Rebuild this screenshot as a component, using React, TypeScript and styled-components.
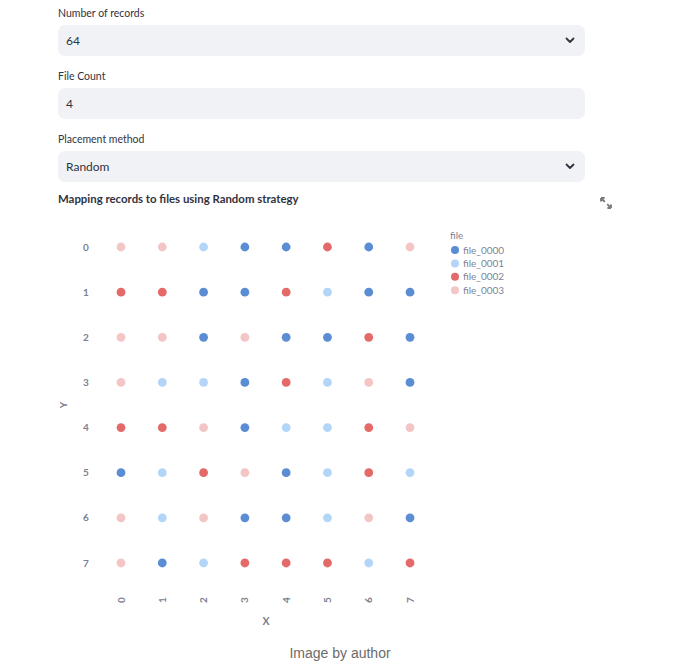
import React from "react";
import styled, { createGlobalStyle } from "styled-components";

const Global = createGlobalStyle`
  html, body { margin: 0; padding: 0; background: #ffffff; }
  body { font-family: Lato, "Noto Sans", sans-serif; color: #31333f; }
`;

const Page = styled.div`
  width: 680px;
  height: 662px;
  overflow: hidden;
  display: flex;
  flex-direction: column;
`;

const Column = styled.div`
  margin-left: 58px;
  width: 527px;
  padding-top: 6px;
  display: flex;
  flex-direction: column;
`;

const Field = styled.div`
  display: flex;
  flex-direction: column;
  gap: 5px;
  margin-bottom: 13px;
`;

const Label = styled.div`
  font-size: 10.5px;
  line-height: 14px;
  color: #31333f;
`;

const Box = styled.div`
  height: 31px;
  border-radius: 7px;
  background: #f0f2f6;
  display: flex;
  align-items: center;
  justify-content: space-between;
  padding: 0 10px 0 8px;
  box-sizing: border-box;
  font-size: 12px;
  color: #31333f;
`;

const ChartHead = styled.div`
  position: relative;
  margin-top: -4px;
  font-size: 11.4px;
  line-height: 16px;
  font-weight: 700;
  color: #31333f;
`;

const Expand = styled.div`
  position: absolute;
  left: 542px;
  top: 6px;
  width: 12px;
  height: 12px;
  display: flex;
`;

const ChartSvg = styled.svg`
  display: block;
  margin-top: 8px;
  font-family: Lato, "Noto Sans", sans-serif;
`;

const Caption = styled.div`
  text-align: center;
  font-family: "Liberation Sans", Arial, sans-serif;
  font-size: 14px;
  line-height: 20px;
  color: #6b6b6b;
  margin-top: 4px;
`;

const Chevron = () => (
  <svg width="10" height="7" viewBox="0 0 10 7">
    <path d="M1.5 1.5 L5 5 L8.5 1.5" fill="none" stroke="#31333f" strokeWidth="1.8" strokeLinecap="round" strokeLinejoin="round" />
  </svg>
);

const COLORS: Record<string, string> = {
  D: "#5a8dd3",
  L: "#b3d6f8",
  R: "#e46a6a",
  P: "#f4c5c5",
};

const GRID = [
  "PPLDDRDP",
  "RRDDRLDD",
  "PPDPDDRD",
  "PLLDRLPD",
  "RRPDLLRP",
  "DLRPDLRL",
  "PLPDDLPD",
  "PDLRRRLR",
];

const OX = 58;
const OY = 215;
const colX = (j: number) => 121 + j * 41.29 - OX;
const rowY = (i: number) => 247 + i * 45.14 - OY;

const LEGEND = [
  ["D", "file_0000"],
  ["L", "file_0001"],
  ["R", "file_0002"],
  ["P", "file_0003"],
];

const Chart = () => (
  <ChartSvg width="560" height="424" viewBox="0 0 560 424">
    {GRID.map((row, i) =>
      row.split("").map((c, j) => (
        <circle key={`${i}-${j}`} cx={colX(j)} cy={rowY(i)} r="4.4" fill={COLORS[c]} />
      ))
    )}
    {GRID.map((_, i) => (
      <text key={`y${i}`} x={86 - OX} y={rowY(i) + 3.6} fontSize="10" fontWeight="700" fill="#7d808e" textAnchor="middle">
        {i}
      </text>
    ))}
    {GRID.map((_, j) => (
      <text
        key={`x${j}`}
        transform={`translate(${colX(j) + 3.5}, ${600 - OY}) rotate(-90)`}
        fontSize="10"
        fontWeight="700"
        fill="#7d808e"
        textAnchor="middle"
      >
        {j}
      </text>
    ))}
    <text transform={`translate(${67 - OX}, ${405 - OY}) rotate(-90)`} fontSize="10" fontWeight="700" fill="#7d808e" textAnchor="middle">
      Y
    </text>
    <text x={266 - OX} y={625 - OY} fontSize="10.5" fontWeight="700" fill="#7d808e" textAnchor="middle">
      X
    </text>
    <text x={450 - OX} y={238.5 - OY} fontSize="10" fill="#808495">file</text>
    {LEGEND.map(([c, name], k) => {
      const cy = 250 + k * 13.4 - OY;
      return (
        <g key={name}>
          <circle cx={455 - OX} cy={cy} r="4" fill={COLORS[c]} />
          <text x={463 - OX} y={cy + 3.5} fontSize="10" fill="#808495">{name}</text>
        </g>
      );
    })}
  </ChartSvg>
);

export default function App() {
  return (
    <Page>
      <Global />
      <Column>
        <Field>
          <Label>Number of records</Label>
          <Box>
            <span>64</span>
            <Chevron />
          </Box>
        </Field>
        <Field>
          <Label>File Count</Label>
          <Box>
            <span>4</span>
          </Box>
        </Field>
        <Field>
          <Label>Placement method</Label>
          <Box>
            <span>Random</span>
            <Chevron />
          </Box>
        </Field>
        <ChartHead>
          Mapping records to files using Random strategy
          <Expand>
            <svg width="12" height="12" viewBox="0 0 12 12">
              <path d="M1 1 L4.8 4.8 M1 1 L1 4.6 M1 1 L4.6 1" stroke="#7a7a7a" strokeWidth="1.8" fill="none" />
              <path d="M11 11 L7.2 7.2 M11 11 L11 7.4 M11 11 L7.4 11" stroke="#7a7a7a" strokeWidth="1.8" fill="none" />
            </svg>
          </Expand>
        </ChartHead>
        <Chart />
      </Column>
      <Caption>Image by author</Caption>
    </Page>
  );
}
